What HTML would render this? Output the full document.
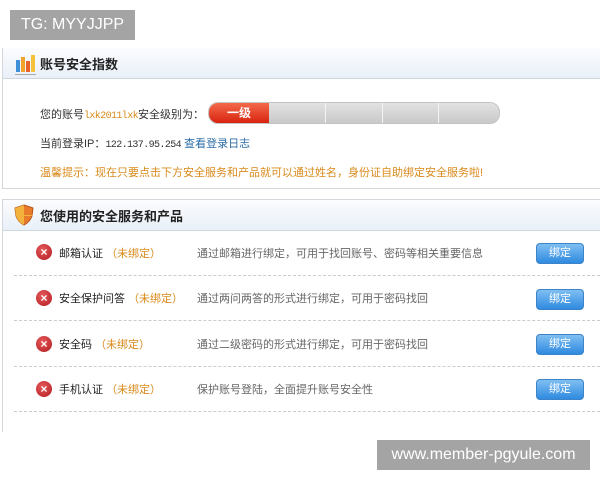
<!DOCTYPE html>
<html><head><meta charset="utf-8"><style>
body{margin:0;width:600px;height:480px;background:#fff;position:relative;overflow:hidden;font-family:"Liberation Sans","Noto Sans CJK SC",sans-serif;}
.a{position:absolute;white-space:nowrap}
.panel{position:absolute;left:2px;right:-4px;border:1px solid #d4d8dc;}
.hd{position:absolute;left:0;right:0;top:0;height:29px;background:linear-gradient(#fbfcfe,#e9f0f8);border-bottom:1px solid #cfd6de;}
.t{font-size:13px;font-weight:bold;color:#222}
.s{font-size:11px;color:#333}
.x{position:absolute;left:36px;width:16px;height:16px;border-radius:50%;background:radial-gradient(circle at 40% 35%,#e45a5a,#b31b22);color:#fff;font-size:12px;line-height:16px;text-align:center;font-weight:bold}
.btn{position:absolute;left:536px;width:46px;height:19px;border:1px solid #3c83c7;border-radius:4px;background:linear-gradient(#7fbff3,#2f8ae0);color:#fff;font-size:11px;line-height:19px;text-align:center}
.dash{position:absolute;left:14px;right:0;border-top:1px dashed #ccc}
.o{color:#d98a1c}
.m{font-family:'Liberation Mono',monospace;font-size:10px;letter-spacing:-0.6px}
</style></head><body>
<div class="a" style="left:10px;top:10px;width:125px;height:30px;background:#a4a4a4;color:#fff;font-size:16px;line-height:30px;text-align:center">TG: MYYJJPP</div>

<div class="panel" style="top:48px;height:140px;border-top:none">
 <div class="hd" style="height:30px;"></div>
 <svg class="a" style="left:11px;top:4px" width="22" height="24"><rect x="2" y="8" width="4" height="12" fill="#3f8fd8"/><rect x="7" y="5" width="4" height="15" fill="#f2a12a"/><rect x="12" y="9" width="4" height="11" fill="#e6622a"/><rect x="17" y="3" width="4" height="17" fill="#f3c23a"/><rect x="1" y="22" width="21" height="1" fill="#aaa"/></svg>
 <div class="a t" style="left:37px;top:6px">账号安全指数</div>
 <div class="a s" style="left:37px;top:58px">您的账号<span class="o m">lxk2011lxk</span>安全级别为：</div>
 <div class="a" style="left:205px;top:54px;width:290px;height:20px;border-radius:10px;background:linear-gradient(#e2e2e2,#c9c9c9);overflow:hidden;border:1px solid #c4c4c4">
  <div class="a" style="left:0;top:0;width:60px;height:20px;background:linear-gradient(#f36a4a,#d8230f);color:#fff;font-weight:bold;font-size:12px;line-height:20px;text-align:center">一级</div>
  <div class="a" style="left:116px;top:0;width:1px;height:20px;background:#f4f4f4"></div>
  <div class="a" style="left:173px;top:0;width:1px;height:20px;background:#f4f4f4"></div>
  <div class="a" style="left:229px;top:0;width:1px;height:20px;background:#f4f4f4"></div>
 </div>
 <div class="a s" style="left:37px;top:87px">当前登录IP：<span class="m">122.137.95.254</span> <span style="color:#2d6ea8">查看登录日志</span></div>
 <div class="a s" style="left:37px;top:116px;color:#d98a1c">温馨提示：现在只要点击下方安全服务和产品就可以通过姓名，身份证自助绑定安全服务啦!</div>
</div>

<div class="panel" style="top:199px;height:232px;border-bottom:none">
 <div class="hd" style="height:30px"></div>
 <svg class="a" style="left:11px;top:4px" width="20" height="22"><path d="M10 1 L19 4 L18 12 Q16 18 10 21 Q4 18 2 12 L1 4 Z" fill="#e87a2a" stroke="#b8561a"/><path d="M10 1 L10 21 Q4 18 2 12 L1 4 Z M1 11 L19 11 L18 12 L10 12" fill="#f5c040" opacity=".8"/></svg>
 <div class="a t" style="left:37px;top:6px">您使用的安全服务和产品</div>
</div>

<div class="x" style="top:244px">×</div><div class="a s" style="left:59px;top:245px;color:#222">邮箱认证 <span class="o">（未绑定）</span></div><div class="a s" style="left:197px;top:245px;color:#666">通过邮箱进行绑定，可用于找回账号、密码等相关重要信息</div><div class="btn" style="top:243px">绑定</div>
<div class="dash" style="top:275px"></div>
<div class="x" style="top:290px">×</div><div class="a s" style="left:59px;top:290px;color:#222">安全保护问答 <span class="o">（未绑定）</span></div><div class="a s" style="left:197px;top:290px;color:#666">通过两问两答的形式进行绑定，可用于密码找回</div><div class="btn" style="top:289px">绑定</div>
<div class="dash" style="top:320px"></div>
<div class="x" style="top:336px">×</div><div class="a s" style="left:59px;top:336px;color:#222">安全码 <span class="o">（未绑定）</span></div><div class="a s" style="left:197px;top:336px;color:#666">通过二级密码的形式进行绑定，可用于密码找回</div><div class="btn" style="top:334px">绑定</div>
<div class="dash" style="top:366px"></div>
<div class="x" style="top:381px">×</div><div class="a s" style="left:59px;top:381px;color:#222">手机认证 <span class="o">（未绑定）</span></div><div class="a s" style="left:197px;top:381px;color:#666">保护账号登陆，全面提升账号安全性</div><div class="btn" style="top:379px">绑定</div>
<div class="dash" style="top:411px"></div>

<div class="a" style="left:377px;top:440px;width:213px;height:30px;background:#a4a4a4;color:#fff;font-size:16px;line-height:30px;text-align:center">www.member-pgyule.com</div>
</body></html>
